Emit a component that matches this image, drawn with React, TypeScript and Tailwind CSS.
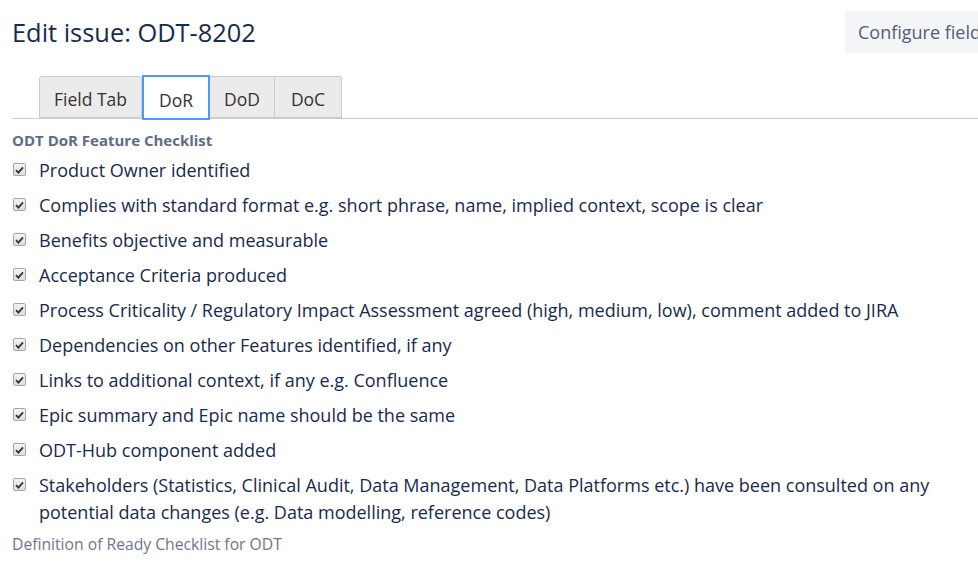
import React from "react";

const items = [
  "Product Owner identified",
  "Complies with standard format e.g. short phrase, name, implied context, scope is clear",
  "Benefits objective and measurable",
  "Acceptance Criteria produced",
  "Process Criticality / Regulatory Impact Assessment agreed (high, medium, low), comment added to JIRA",
  "Dependencies on other Features identified, if any",
  "Links to additional context, if any e.g. Confluence",
  "Epic summary and Epic name should be the same",
  "ODT-Hub component added",
  "Stakeholders (Statistics, Clinical Audit, Data Management, Data Platforms etc.) have been consulted on any potential data changes (e.g. Data modelling, reference codes)",
];

function Check() {
  return (
    <span className="mt-[6px] ml-[1px] mr-[13px] flex h-[13px] w-[13px] shrink-0 items-center justify-center rounded-[2px] border border-[#a6a6a6] bg-gradient-to-b from-[#f4f4f4] to-[#dedede]">
      <svg width="9" height="8" viewBox="0 0 9 8">
        <path d="M1 4.2 L3.4 6.6 L8 1.4" fill="none" stroke="#333" strokeWidth="1.8" />
      </svg>
    </span>
  );
}

export default function App() {
  return (
    <div className="h-[565px] w-[978px] overflow-hidden bg-white pl-[12px] text-[#172b4d]" style={{ fontFamily: '"Open Sans", "Noto Sans", sans-serif' }}>
      <div className="flex items-start pt-[11px]">
        <h1 className="w-[833px] shrink-0 pt-[3px] text-[25.4px] leading-[36px] text-[#172b4d]">Edit issue: ODT-8202</h1>
        <div className="flex h-[42px] shrink-0 items-center whitespace-nowrap rounded-[3px] bg-[#f4f5f7] pl-[13px] pr-[20px] text-[18px] text-[#505f79]">Configure fields</div>
      </div>
      <div className="mt-[23px] flex border-b border-[#cccccc] pl-[27px]">
        <div className="mb-[-1px] flex h-[42px] w-[103px] items-center justify-center rounded-t-[3px] border border-[#cccccc] bg-[#ebebeb] pt-[5px] text-[17.5px] text-[#333]">Field Tab</div>
        <div className="mb-[-2px] mt-[-1px] flex h-[45px] w-[68px] items-center justify-center border-2 border-[#4c9aff] bg-white pt-[5px] text-[17.5px] text-[#333]">DoR</div>
        <div className="mb-[-1px] flex h-[42px] w-[65px] items-center justify-center border border-l-0 border-[#cccccc] bg-[#ebebeb] pt-[5px] text-[17.5px] text-[#333]">DoD</div>
        <div className="mb-[-1px] flex h-[42px] w-[67px] items-center justify-center rounded-tr-[3px] border border-l-0 border-[#cccccc] bg-[#ebebeb] pt-[5px] text-[17.5px] text-[#333]">DoC</div>
      </div>
      <div className="mt-[11px] text-[15px] font-bold leading-[20px] text-[#5e6c84]">ODT DoR Feature Checklist</div>
      <div className="mt-[7px] flex flex-col gap-[8px] pr-[30px]">
        {items.map((t) => (
          <div key={t} className="flex items-start">
            <Check />
            <span className="text-[18px] leading-[27px]">{t}</span>
          </div>
        ))}
      </div>
      <div className="mt-[8px] text-[15.7px] leading-[20px] text-[#6b778c]">Definition of Ready Checklist for ODT</div>
    </div>
  );
}
